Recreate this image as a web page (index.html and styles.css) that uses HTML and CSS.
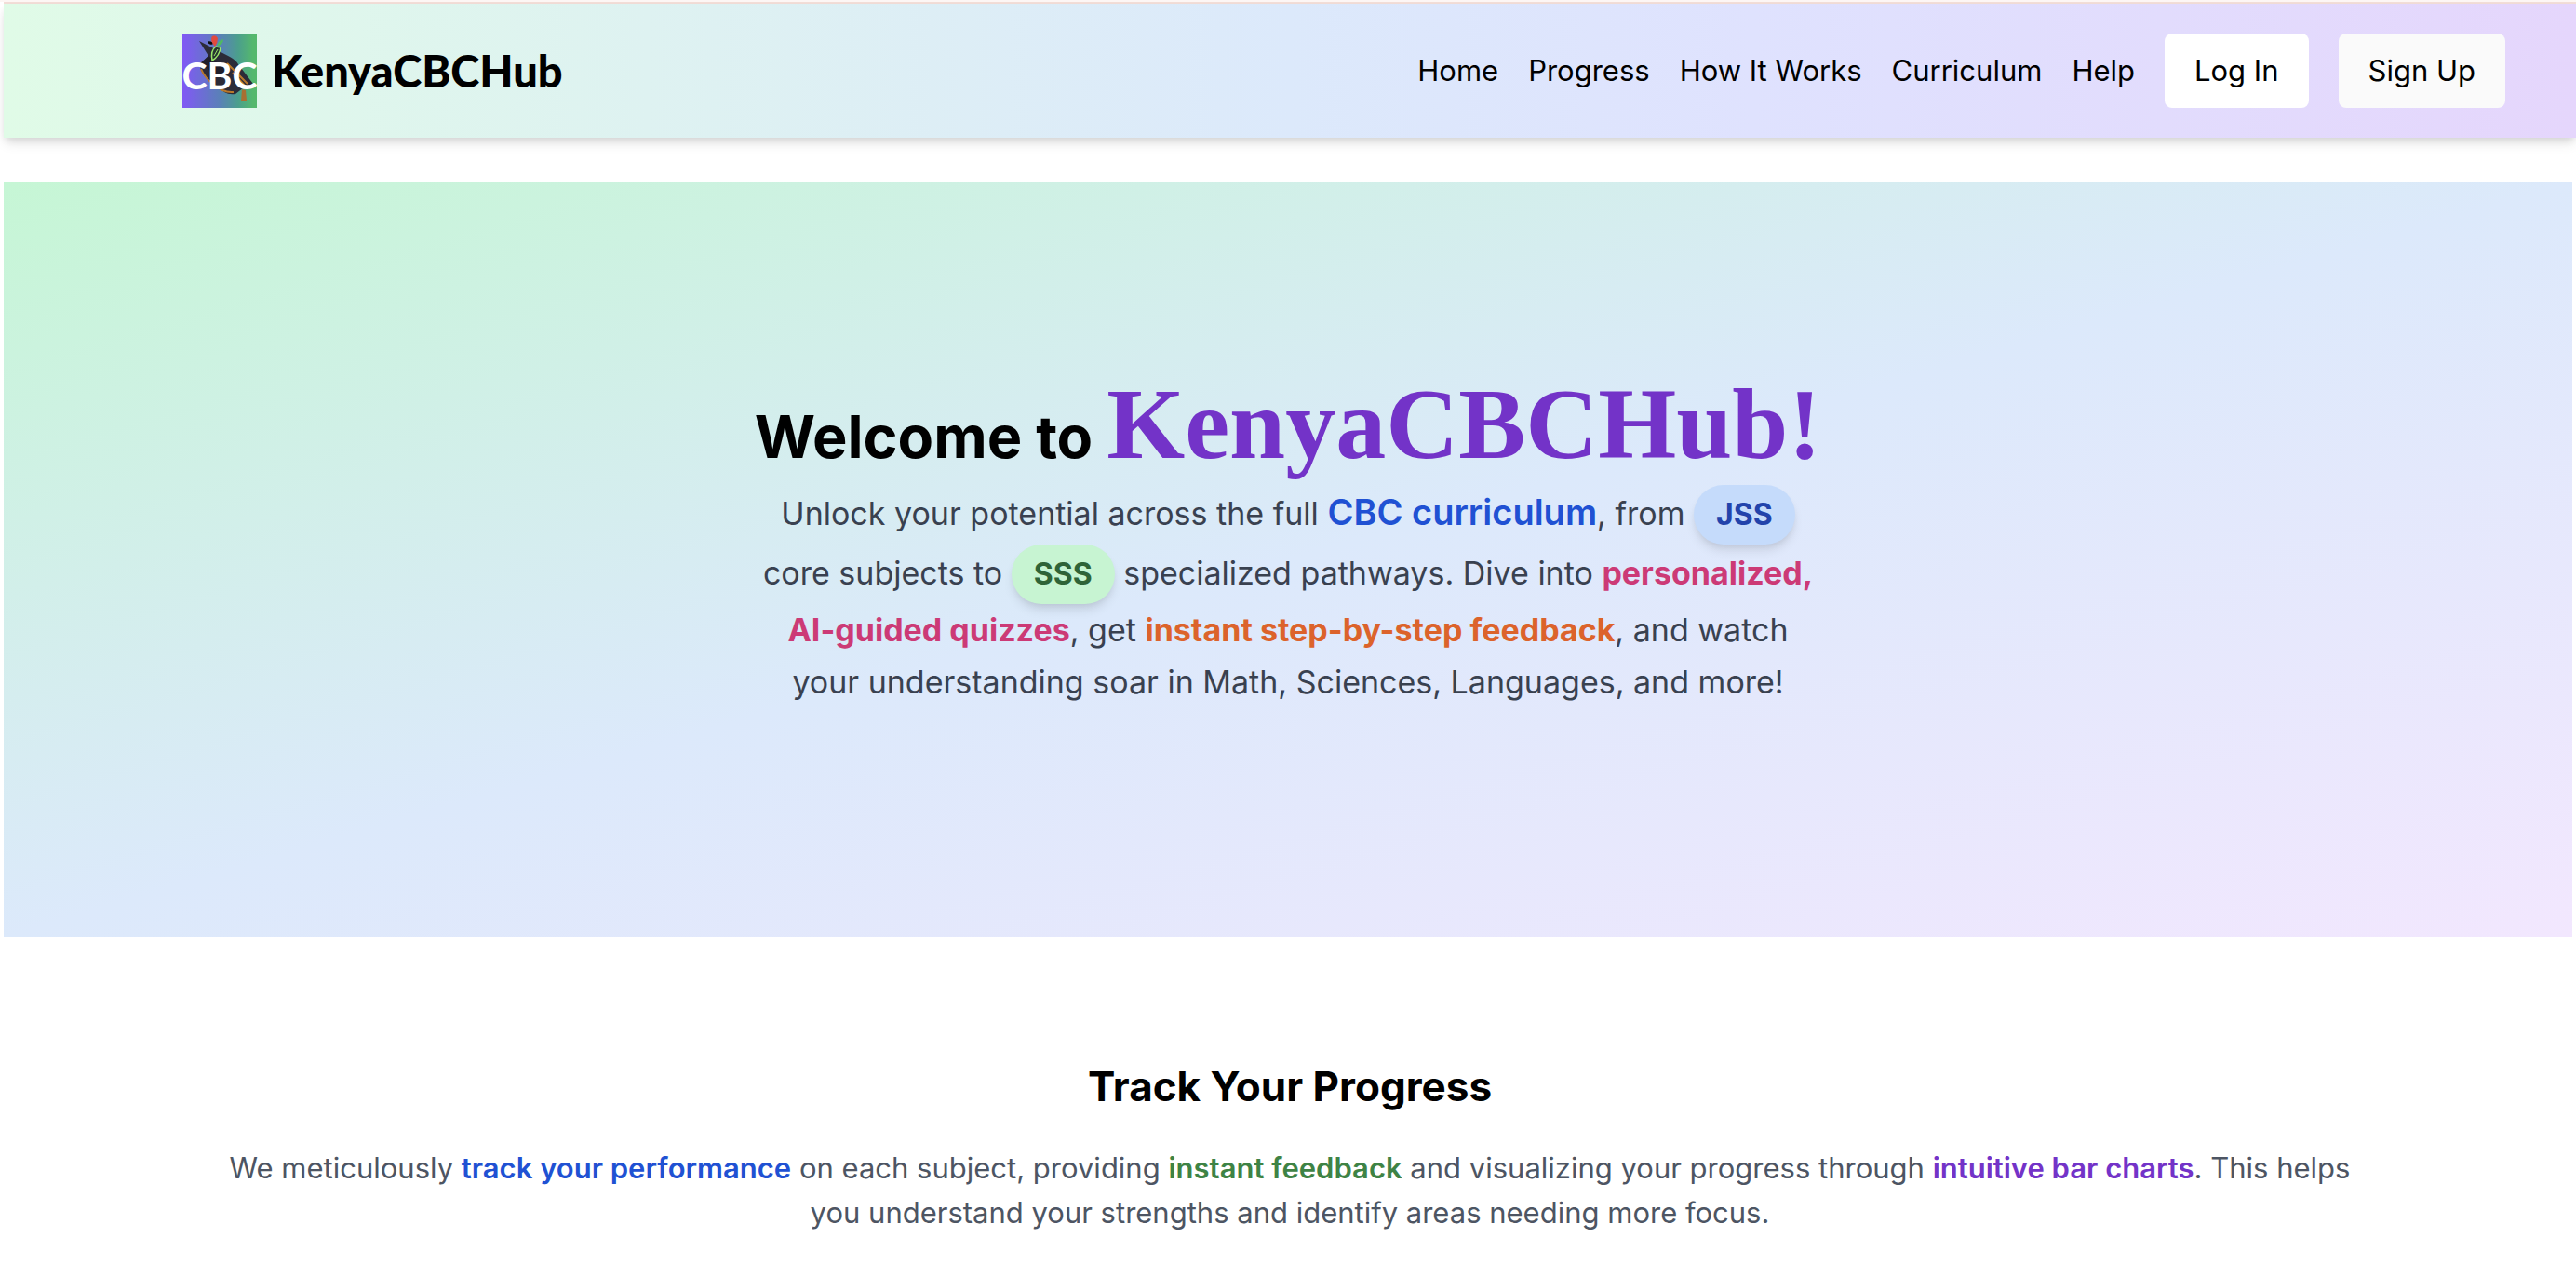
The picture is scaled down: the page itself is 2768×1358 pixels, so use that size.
FILE: index.html
```html
<!DOCTYPE html>
<html lang="en">
<head>
<meta charset="utf-8">
<meta name="viewport" content="width=device-width, initial-scale=1">
<title>KenyaCBCHub</title>
<link rel="stylesheet" href="styles.css">
</head>
<body>
<header class="site-header">
  <a class="brand" href="#home">
    <svg class="brand-logo" viewBox="0 0 80 80" role="img" aria-label="CBC">
      <defs>
        <linearGradient id="logo-bg" x1="0" y1="0" x2="1" y2="0">
          <stop offset="0" stop-color="#8159f5"/>
          <stop offset="0.5" stop-color="#5a80b8"/>
          <stop offset="0.75" stop-color="#4b9f8c"/>
          <stop offset="0.95" stop-color="#55b86d"/>
          <stop offset="1" stop-color="#55b86d"/>
        </linearGradient>
      </defs>
      <rect width="80" height="80" fill="url(#logo-bg)"/>
      <path d="M18 8 L51 25 Q58 29 60 33 L79 58 L66 58 L57 65 Q50 66 45 63 L24 46 Q18 38 19 32 L28 24 Z" fill="#2c2b38"/>
      <path d="M28 24 L19 33 L40 46 L52 42 Z" fill="#201f2b"/>
      <path d="M20 38 Q24 48 34 55 Q44 64 55 63 M48 32 L70 54 M54 42 L68 57" fill="none" stroke="#b9782b" stroke-width="2"/>
      <path d="M64 60 L68 61 L69 72 L63 73 Z" fill="#a96f32"/>
      <ellipse cx="30" cy="10" rx="3" ry="1.5" fill="#0b0b0b" transform="rotate(20 30 10)"/>
      <path d="M35 14 Q29 7 32 3 Q36 1 38 5 Q38 10 35 14Z" fill="#e04a3e"/>
      <path d="M37 14 Q38 7 44 6 Q44 12 37 14Z" fill="#4fb963"/>
      <path d="M32 29 Q30 18 36 14 L41 15 Q40 24 32 29Z" fill="#26352f" stroke="#9be86a" stroke-width="1.5"/>
      <path d="M34 24 L38 17" stroke="#9be86a" stroke-width="1"/>
      <text class="logo-text" x="40" y="60" text-anchor="middle">CBC</text>
    </svg>
    <span class="brand-name">KenyaCBCHub</span>
  </a>
  <nav class="site-nav" aria-label="Main">
    <a href="#home">Home</a>
    <a href="#progress">Progress</a>
    <a href="#how">How It Works</a>
    <a href="#curriculum">Curriculum</a>
    <a href="#help">Help</a>
    <button class="btn btn-login" type="button">Log In</button>
    <button class="btn btn-signup" type="button">Sign Up</button>
  </nav>
</header>
<main>
  <section class="hero" id="home">
    <h1 class="hero-title">Welcome to <span class="hero-brand">KenyaCBCHub!</span></h1>
    <p class="hero-text">Unlock your potential across the full <strong class="lead">CBC curriculum</strong>, from <span class="pill pill-blue">JSS</span> core subjects to <span class="pill pill-green">SSS</span> specialized pathways. Dive into <strong class="pink">personalized, AI-guided quizzes</strong>, get <strong class="orange">instant step-by-step feedback</strong>, and watch your understanding soar in Math, Sciences, Languages, and more!</p>
  </section>
  <section class="progress" id="progress">
    <h2 class="section-title">Track Your Progress</h2>
    <p class="section-text">We meticulously <strong class="blue">track your performance</strong> on each subject, providing <strong class="green">instant feedback</strong> and visualizing your progress through <strong class="purple">intuitive bar charts</strong>. This helps you understand your strengths and identify areas needing more focus.</p>
  </section>
</main>
</body>
</html>
```
FILE: styles.css
```css
* { box-sizing: border-box; }

body {
  margin: 0;
  padding-left: 4px;
  border-top: 2px solid #fdf6f4;
  background: #fff;
  color: #000;
  font-family: Inter, "Liberation Sans", sans-serif;
  font-size: 31px;
  line-height: 48px;
  overflow-x: hidden;
}

h1, h2, p { margin: 0; }
strong { font-weight: 600; }

.site-header {
  display: flex;
  align-items: center;
  justify-content: space-between;
  padding: 32px 76px 32px 192px;
  background: linear-gradient(to right, #e0fbe7, #dce9fb 50%, #dfe2fe 68%, #e5d6fc);
  box-shadow: 0 8px 12px -2px rgba(0, 0, 0, 0.1), 0 4px 8px -2px rgba(0, 0, 0, 0.1), 0 -2px 0 #f2ddd7;
  margin-top: 2px;
}

.brand {
  display: flex;
  align-items: center;
  gap: 16px;
  color: #000;
  text-decoration: none;
}
.brand-logo { width: 80px; height: 80px; display: block; }
.logo-text { font: 700 41px Lato, sans-serif; fill: #fff; }
.brand-name { font: 900 47px/64px Lato, sans-serif; }

.site-nav { display: flex; align-items: center; gap: 32px; }
.site-nav a { color: #000; text-decoration: none; }

.btn {
  height: 80px;
  padding: 0 32px;
  border: 0;
  border-radius: 8px;
  color: #000;
  font: inherit;
}
.btn-login { background: #fff; }
.btn-signup { background: #fafafa; }

.hero {
  display: flex;
  flex-direction: column;
  align-items: center;
  margin: 48px 4px 0 0;
  padding: 208px 32px 246px;
  background: linear-gradient(to bottom right, #c6f6d5, #dce9fb 50%, #f2e7fe);
  text-align: center;
}
.hero-title { font-size: 63px; font-weight: 700; line-height: 104px; }
.hero-brand {
  color: #7333c8;
  font: 700 108px/104px "Liberation Serif", serif;
}
.hero-text {
  max-width: 1144px;
  color: #394150;
  font-size: 34px;
  line-height: 56px;
}
.lead { color: #2051d3; font-size: 38px; }
.pill {
  display: inline-block;
  padding: 8px 24px;
  border-radius: 32px;
  font-size: 32px;
  font-weight: 700;
  line-height: 48px;
  box-shadow: 0 8px 12px -2px rgba(0, 0, 0, 0.1), 0 4px 8px -4px rgba(0, 0, 0, 0.1);
}
.pill-blue { background: #c5dbfb; color: #2243ab; }
.pill-green { background: #c7f4d2; color: #2f6338; }
.pink { color: #cc3a76; font-weight: 700; }
.orange { color: #dc632b; font-weight: 700; }

.progress {
  display: flex;
  flex-direction: column;
  align-items: center;
  gap: 32px;
  padding: 128px 236px 20px;
  text-align: center;
}
.section-title { font-size: 44px; font-weight: 700; line-height: 64px; }
.section-text { color: #4d5563; }
.blue { color: #2051d3; }
.green { color: #3e8345; }
.purple { color: #7333c8; }
```
